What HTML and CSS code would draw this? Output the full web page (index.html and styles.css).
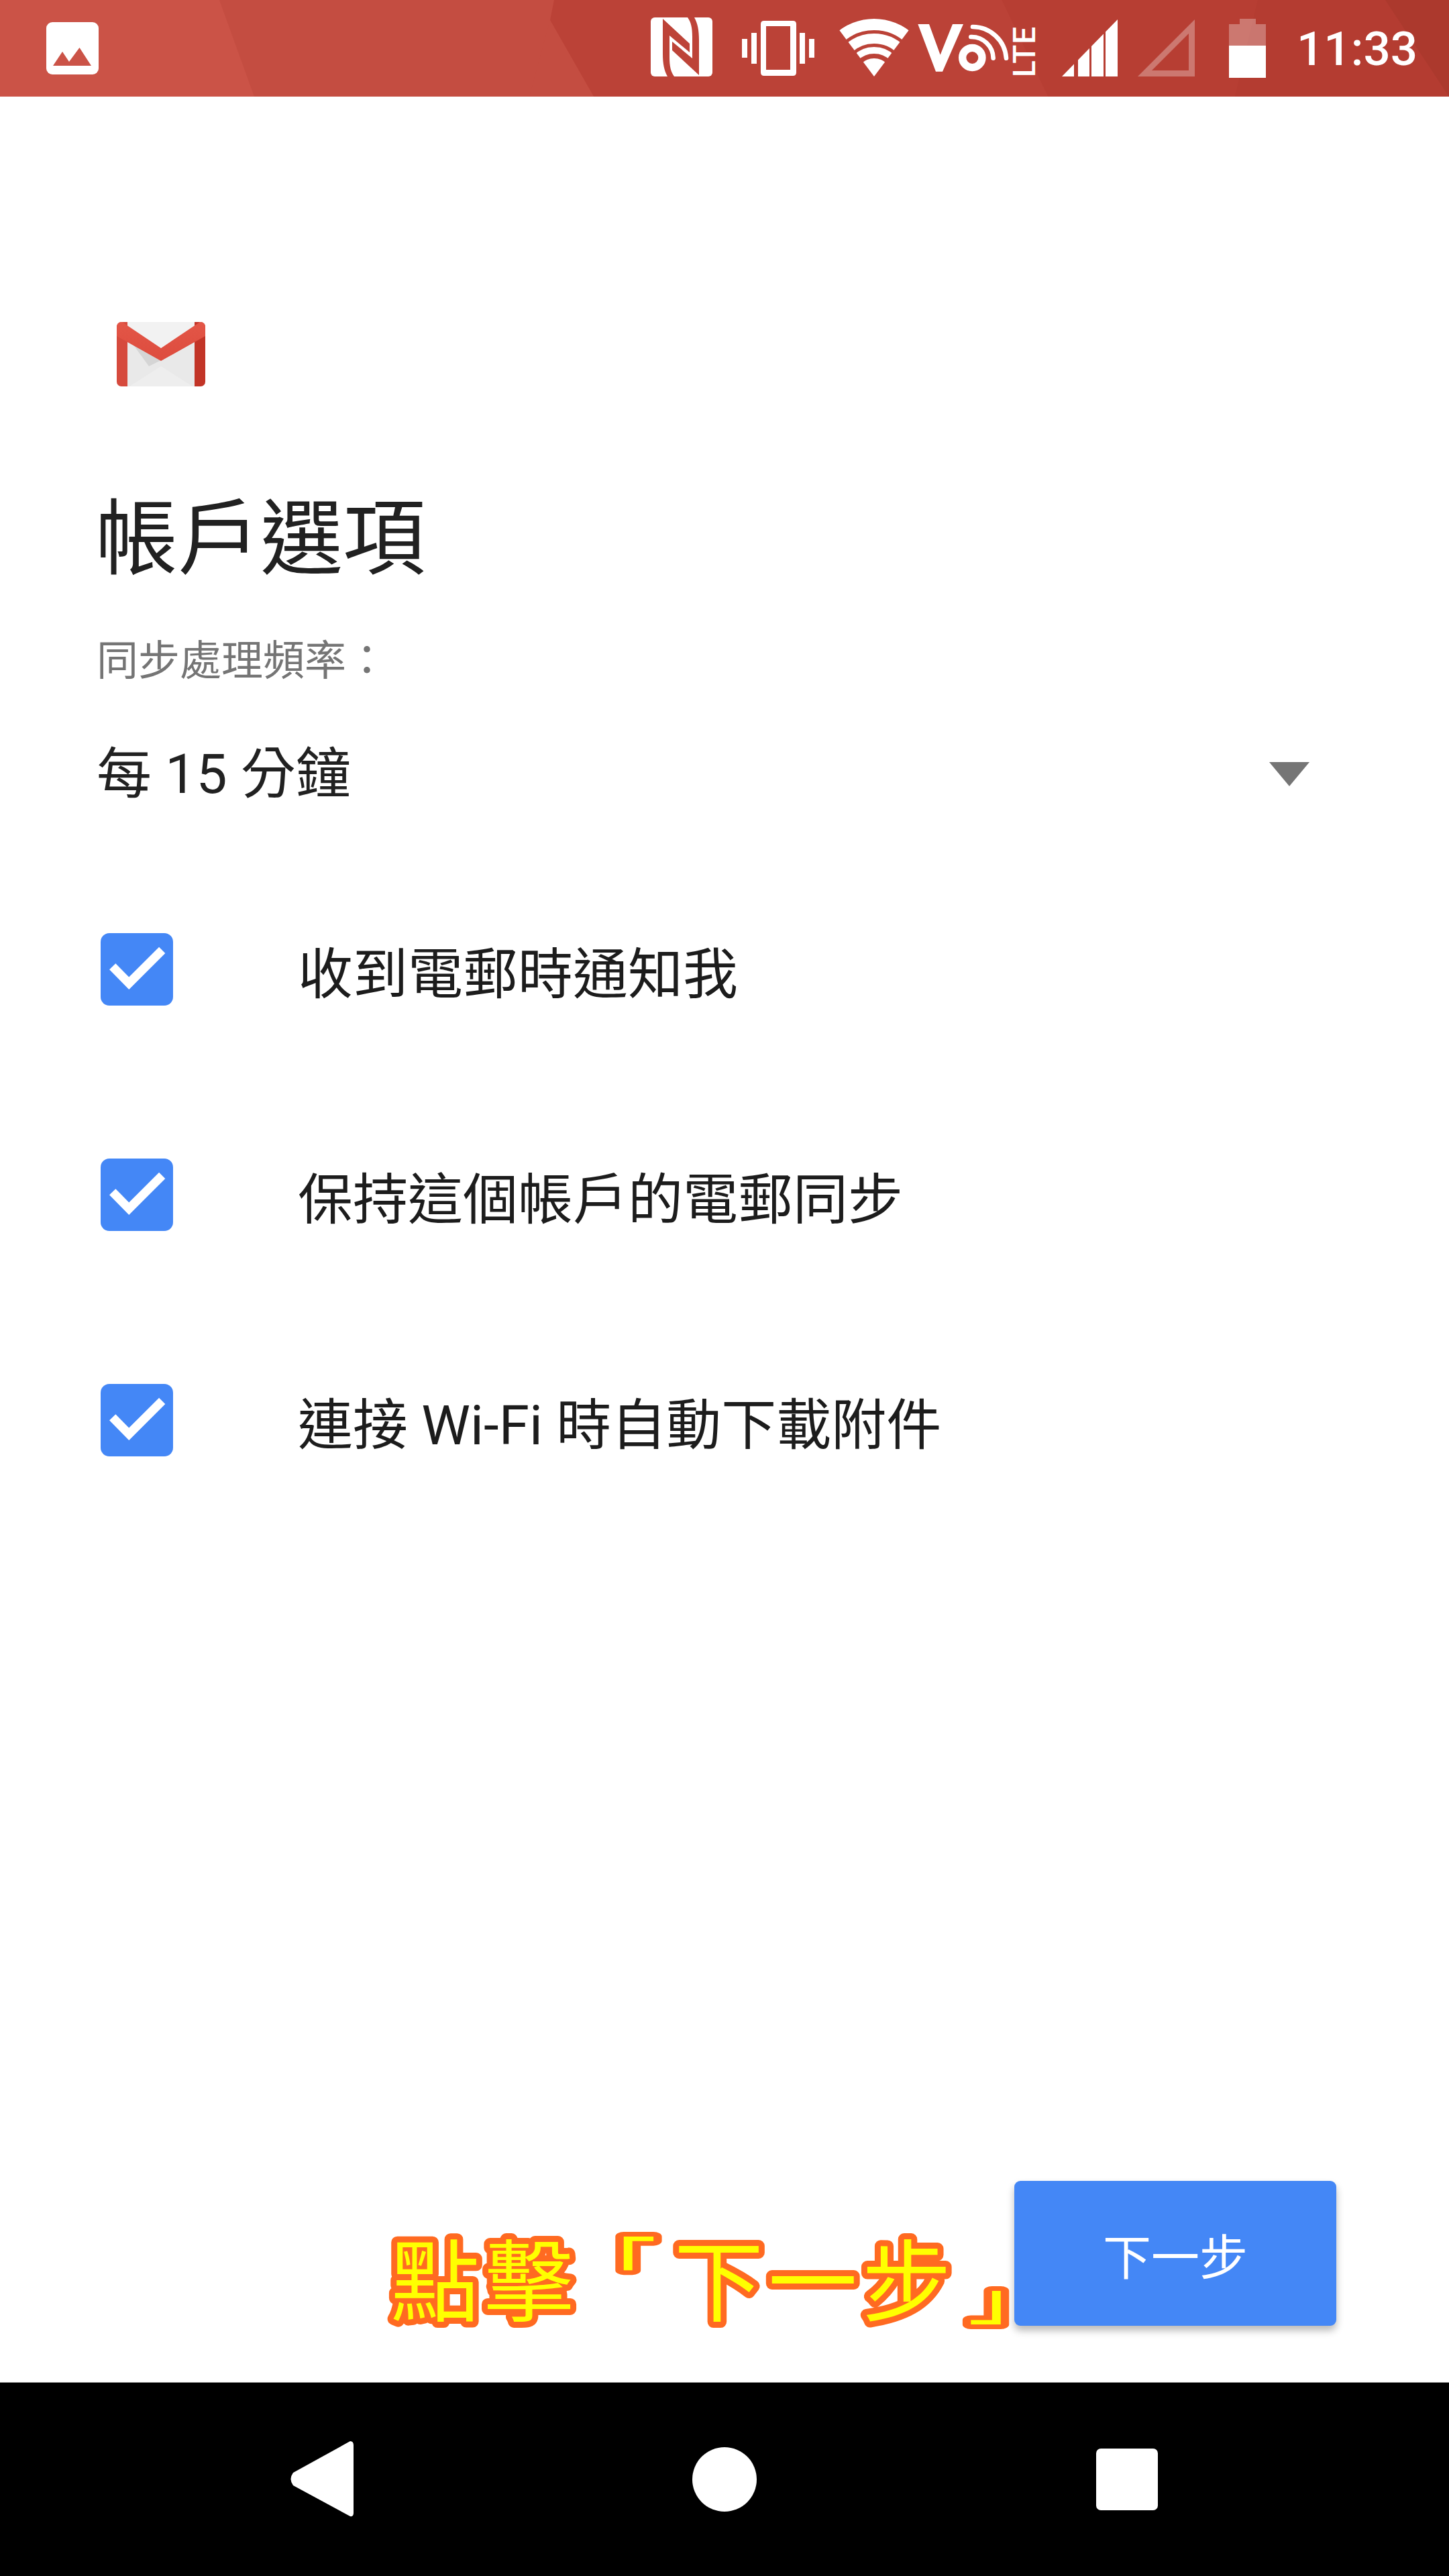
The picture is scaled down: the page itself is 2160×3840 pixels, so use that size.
FILE: index.html
```html
<!DOCTYPE html>
<html lang="zh-Hant">
<head>
<meta charset="utf-8">
<title>帳戶選項</title>
<link rel="stylesheet" href="styles.css">
</head>
<body>
<div class="screen">
  <header class="status">
    <svg class="status-bg" viewBox="0 0 2160 144" preserveAspectRatio="none">
      <rect width="2160" height="144" fill="#c44d41"/>
      <polygon points="0,0 327,0 379,144 0,144" fill="#cb5347"/>
      <polygon points="826,0 1493,0 1562,144 885,144 820,30" fill="#bb4237"/>
      <polygon points="820,30 885,144 789,144" fill="#c44d41"/>
      <polygon points="1493,0 2160,0 2160,144 1562,144" fill="#b73e33"/>
      <polygon points="1875,0 2160,0 2160,144 1841,144" fill="#b43c31"/>
      <polygon points="2065,0 2160,0 2160,144" fill="#ac392d"/>
    </svg>
    <svg class="si si-image" viewBox="69 0 78 144">
      <rect x="69" y="33" width="78" height="78" rx="9" fill="#fff"/>
      <polygon points="79,98 93,77 103,92 118.5,71 136,98" fill="#cb5347"/>
    </svg>
    <svg class="si si-nfc" viewBox="0 -15 110 144">
      <rect x="10" y="11" width="92" height="88" rx="6" fill="#fff"/>
      <path d="M28 13 L68 50 V63 L38 38 V70 C38 84 40 92 45 99 H35 C30 90 28 80 28 65 Z" fill="#bd4338"/>
      <path d="M82 97 L42 60 V47 L72 72 V40 C72 26 70 18 65 11 H75 C80 20 82 30 82 45 Z" fill="#bd4338"/>
    </svg>
    <svg class="si si-vib" viewBox="1106 0 108 144">
      <path fill="#fff" fill-rule="evenodd" d="M1139 31 H1182 Q1187 31 1187 36 V108 Q1187 113 1182 113 H1139 Q1134 113 1134 108 V36 Q1134 31 1139 31 Z M1142 39 V104 H1178 V39 Z"/>
      <rect x="1120" y="49" width="8" height="46" fill="#fff"/>
      <rect x="1106" y="58" width="8" height="28" fill="#fff"/>
      <rect x="1192" y="49" width="8" height="46" fill="#fff"/>
      <rect x="1206" y="58" width="8" height="28" fill="#fff"/>
    </svg>
    <svg class="si si-wifi" viewBox="0 -28 103 144">
      <defs>
        <clipPath id="wedge"><polygon points="52,86 -8,6 -8,-10 112,-10 112,6"/></clipPath>
      </defs>
      <g clip-path="url(#wedge)" fill="none" stroke="#fff">
        <circle cx="52" cy="86" r="77.5" stroke-width="17"/>
        <circle cx="52" cy="86" r="56.5" stroke-width="15"/>
        <circle cx="52" cy="86" r="39" stroke-width="10"/>
        <circle cx="52" cy="86" r="13.5" stroke-width="27"/>
      </g>
    </svg>
    <svg class="si si-vo" viewBox="0 -20 190 144">
      <g transform="scale(0.3333)">
        <polygon points="25,48 75,48 125,185 180,48 228,48 135,260 105,260" fill="#fff"/>
        <circle cx="268" cy="198" r="44" fill="none" stroke="#fff" stroke-width="34"/>
        <g fill="none" stroke="#fff" stroke-linecap="round" stroke-width="20">
          <path d="M262 105 A 97 97 0 0 1 362 200"/>
          <path d="M270 60 A 150 150 0 0 1 420 200"/>
        </g>
      </g>
      <text class="lte" transform="translate(183 95) rotate(-90)">LTE</text>
    </svg>
    <svg class="si si-sig" viewBox="1583 0 83 144">
      <defs>
        <clipPath id="tri"><polygon points="1583,114 1666,29 1666,114"/></clipPath>
      </defs>
      <g clip-path="url(#tri)" fill="#fff">
        <rect x="1583" y="20" width="18" height="100"/>
        <rect x="1607" y="20" width="17" height="100"/>
        <rect x="1627" y="20" width="18" height="100"/>
        <rect x="1648" y="20" width="18" height="100"/>
      </g>
    </svg>
    <svg class="si si-empty" viewBox="1696 0 85 144">
      <path fill="#fff" fill-opacity="0.3" fill-rule="evenodd" d="M1696 114 L1781 29 V114 Z M1717 105 H1772 V50 Z"/>
    </svg>
    <svg class="si si-bat" viewBox="1832 0 55 144">
      <path fill="#fff" fill-opacity="0.3" d="M1848 28 H1872 V36 H1887 V68 H1832 V36 H1848 Z"/>
      <rect x="1832" y="68" width="55" height="48" fill="#fff"/>
    </svg>
    <span class="clock">11:33</span>
  </header>

  <main class="content">
    <svg class="logo" viewBox="0 0 132 96">
      <defs>
        <clipPath id="env"><rect width="132" height="96" rx="7"/></clipPath>
        <linearGradient id="mred" x1="0" y1="0" x2="0" y2="1">
          <stop offset="0" stop-color="#e35647"/><stop offset="1" stop-color="#dd4c3e"/>
        </linearGradient>
      </defs>
      <g clip-path="url(#env)">
        <rect width="132" height="96" fill="#e9e9e9"/>
        <polygon points="0,0 132,0 66,57" fill="#f2f2f2"/>
        <polygon points="16,22 66,57 110,28 66,57 48,66" fill="#d5d5d5"/>
        <polygon points="19,96 66,66 113,96" fill="#eeeeee"/>
        <polygon points="0,0 16,0 16,96 0,96" fill="#d64a3d"/>
        <polygon points="116,0 132,0 132,96 116,96" fill="#c23427"/>
        <polygon points="0,0 8,0 66,39 124,0 132,0 132,21 66,58 0,21" fill="url(#mred)"/>
      </g>
    </svg>
    <h1 class="title">帳戶選項</h1>
    <p class="label">同步處理頻率：</p>
    <div class="select">
      <span class="select-value">每 15 分鐘</span>
      <span class="caret"></span>
    </div>
    <ul class="options">
      <li class="option">
        <svg class="check" viewBox="0 0 108 108"><rect width="108" height="108" rx="13" fill="#4487f6"/><path d="M17.7 49.7 L42.3 74.7 L91.7 25.3" fill="none" stroke="#fff" stroke-width="13"/></svg>
        <span class="option-text">收到電郵時通知我</span>
      </li>
      <li class="option">
        <svg class="check" viewBox="0 0 108 108"><rect width="108" height="108" rx="13" fill="#4487f6"/><path d="M17.7 49.7 L42.3 74.7 L91.7 25.3" fill="none" stroke="#fff" stroke-width="13"/></svg>
        <span class="option-text">保持這個帳戶的電郵同步</span>
      </li>
      <li class="option">
        <svg class="check" viewBox="0 0 108 108"><rect width="108" height="108" rx="13" fill="#4487f6"/><path d="M17.7 49.7 L42.3 74.7 L91.7 25.3" fill="none" stroke="#fff" stroke-width="13"/></svg>
        <span class="option-text">連接 Wi-Fi 時自動下載附件</span>
      </li>
    </ul>
    <button class="next">下一步</button>
  </main>

  <nav class="navbar">
    <svg class="nav-back" viewBox="0 0 95 113"><path d="M90 0 Q95 0 95 6 V107 Q95 113 90 112 L5 66 Q-2 56.500 5 47 Z" fill="#fff"/></svg>
    <span class="nav-home"></span>
    <span class="nav-recent"></span>
  </nav>

  <svg class="callout" viewBox="0 0 960 200">
    <text class="callout-text" x="9" y="150">點擊</text>
    <text class="callout-text bracket" transform="translate(268 100) scale(1.25 0.7)">「</text>
    <text class="callout-text" x="432" y="150">下一步</text>
    <text class="callout-text bracket" transform="translate(870 158) scale(1.25 0.7)">」</text>
  </svg>
</div>
</body>
</html>
```
FILE: styles.css
```css
* { box-sizing: border-box; }
html, body { margin: 0; padding: 0; background: #fff; }
.screen {
  position: relative;
  width: 2160px;
  height: 3840px;
  display: flex;
  flex-direction: column;
  font-family: Roboto, "Noto Sans CJK TC", sans-serif;
  color: #212121;
  overflow: hidden;
}

/* status bar */
.status {
  position: relative;
  height: 144px;
  flex: none;
  display: flex;
  align-items: center;
}
.status-bg { position: absolute; inset: 0; width: 100%; height: 100%; }
.si { position: relative; display: block; height: 144px; flex: none; }
.si-image { width: 78px; margin-left: 69px; }
.si-nfc { width: 110px; margin-left: 813px; }
.si-vib { width: 108px; margin-left: 36px; }
.si-wifi { width: 103px; margin-left: 37px; overflow: visible; }
.si-vo { width: 190px; margin-left: 6px; overflow: visible; }
.si-sig { width: 83px; margin-left: 33px; }
.si-empty { width: 85px; margin-left: 30px; }
.si-bat { width: 55px; margin-left: 51px; }
.lte { font-family: Roboto, sans-serif; font-size: 46px; font-weight: 500; letter-spacing: 1px; fill: #fff; }
.clock {
  position: relative;
  margin-left: 46px;
  font-size: 71px;
  font-weight: 500;
  color: #fff;
  line-height: 1;
}

/* content */
.content {
  flex: 1;
  display: flex;
  flex-direction: column;
  align-items: flex-start;
  min-height: 0;
}
.logo { display: block; width: 132px; height: 96px; margin: 336px 0 0 174px; }
.title {
  margin: 156px 0 0 142px;
  font-size: 123px;
  font-weight: 400;
  line-height: 144px;
}
.label {
  margin: 70px 0 0 144px;
  font-size: 62px;
  line-height: 80px;
  color: #757575;
}
.select {
  align-self: stretch;
  display: flex;
  align-items: center;
  justify-content: space-between;
  height: 100px;
  margin: 78px 208px 0 144px;
}
.select-value { font-size: 82px; line-height: 100px; }
.caret {
  width: 0;
  height: 0;
  border-left: 30px solid transparent;
  border-right: 30px solid transparent;
  border-top: 36px solid #757575;
}
.options {
  list-style: none;
  margin: 73px 0 0 0;
  padding: 0;
  align-self: stretch;
}
.option {
  display: flex;
  align-items: center;
  height: 336px;
  padding-left: 150px;
}
.check { display: block; flex: none; width: 108px; height: 108px; }
.option-text { margin-left: 186px; font-size: 82px; color: #1c1c1c; }
.next {
  align-self: flex-end;
  margin: auto 168px 84px 0;
  width: 480px;
  height: 216px;
  border: 0;
  border-radius: 9px;
  background: #4487f6;
  color: #fff;
  font: inherit;
  font-size: 72px;
  box-shadow: 0 7px 12px rgba(0, 0, 0, 0.28);
}

/* navigation */
.navbar {
  position: relative;
  flex: none;
  height: 289px;
  background: #000;
  border-top: 1px solid #8a8a8a;
}
.nav-back { position: absolute; left: 432px; top: 87px; width: 95px; height: 113px; }
.nav-home { position: absolute; left: 1032px; top: 96px; width: 96px; height: 96px; border-radius: 50%; background: #fff; }
.nav-recent { position: absolute; left: 1634px; top: 98px; width: 92px; height: 92px; border-radius: 7px; background: #fff; }

/* annotation over the page */
.callout { position: absolute; left: 573px; top: 3300px; width: 960px; height: 200px; overflow: visible; }
.callout-text {
  font-family: "Noto Sans CJK TC", sans-serif;
  font-size: 133px;
  letter-spacing: 7px;
  fill: #ffff00;
  stroke: #ff6a21;
  stroke-width: 18px;
  stroke-linejoin: round;
  paint-order: stroke fill;
}
.bracket { font-size: 110px; letter-spacing: 0; font-weight: 500; stroke-width: 20px; }
```
